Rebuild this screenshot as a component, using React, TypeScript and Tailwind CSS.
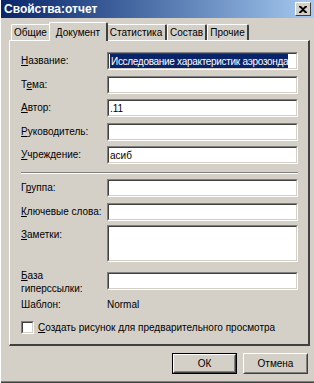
import React from "react";

const font = { fontFamily: '"Liberation Sans", Arial, sans-serif' };

function Field({ h = 18, children }: { h?: number; children?: React.ReactNode }) {
  return (
    <div
      className="w-[191px] border border-t-[#808080] border-l-[#808080] border-b-white border-r-white"
      style={{ height: h }}
    >
      <div className="h-full border border-t-[#404040] border-l-[#404040] border-b-[#d4d0c8] border-r-[#d4d0c8] bg-white overflow-hidden whitespace-nowrap flex items-center pl-[1px] text-[10px] text-black">
        {children}
      </div>
    </div>
  );
}

function Row({ label, mt, h, children, top }: { label: React.ReactNode; mt: number; h?: number; children?: React.ReactNode; top?: boolean }) {
  return (
    <div className={"flex " + (top ? "items-start" : "items-center")} style={{ marginTop: mt }}>
      <div className={"w-[86px] text-[10px] leading-[12px] text-black " + (top ? "pt-[4px]" : "")}>{label}</div>
      <Field h={h}>{children}</Field>
    </div>
  );
}

function Tab({ label, w, active }: { label: string; w: number; active?: boolean }) {
  if (active) {
    return (
      <div
        className="relative z-10 -mx-[2px] -mb-px h-[19px] bg-[#d4d0c8] border-t border-l border-t-white border-l-white border-r-2 border-r-[#404040] rounded-t-[2px] flex items-center justify-center text-[10px] text-black"
        style={{ width: w + 4 }}
      >
        {label}
      </div>
    );
  }
  return (
    <div
      className="h-[16px] bg-[#d4d0c8] border-t border-l border-t-white border-l-white border-r-2 border-r-[#404040] rounded-t-[2px] flex items-center justify-center text-[10px] text-black"
      style={{ width: w }}
    >
      {label}
    </div>
  );
}

function Button({ label, def }: { label: string; def?: boolean }) {
  return (
    <div className={"w-[65px] h-[21px] " + (def ? "border border-black" : "")}>
      <div className="h-full border border-t-white border-l-white border-b-[#404040] border-r-[#404040]">
        <div className="h-full border border-t-[#d4d0c8] border-l-[#d4d0c8] border-b-[#808080] border-r-[#808080] flex items-center justify-center text-[10px] text-black">
          {label}
        </div>
      </div>
    </div>
  );
}

export default function App() {
  return (
    <div className="w-[314px] h-[383px] bg-[#d4d0c8] flex flex-col overflow-hidden border-l border-l-white" style={font}>
      {/* заголовок */}
      <div className="h-[18px] shrink-0 flex items-center justify-between pl-[3px] pr-[3px] bg-gradient-to-r from-[#0a246a] to-[#a6caf0]">
        <span className="text-white font-bold text-[12px] leading-none">Свойства:отчет</span>
        <div className="w-[16px] h-[14px] bg-[#d4d0c8] border border-t-white border-l-white border-b-[#404040] border-r-[#404040] flex items-center justify-center">
          <svg width="8" height="7" viewBox="0 0 8 7">
            <path d="M0 0h2l2 2 2-2h2v1L5 3.5 8 6v1H6L4 5 2 7H0V6l3-2.5L0 1z" fill="black" />
          </svg>
        </div>
      </div>

      {/* вкладки */}
      <div className="flex items-end pl-[10px] pt-[3px] h-[22px] shrink-0">
        <Tab label="Общие" w={40} />
        <Tab label="Документ" w={55} active />
        <Tab label="Статистика" w={61} />
        <Tab label="Состав" w={40} />
        <Tab label="Прочие" w={42} />
      </div>

      {/* панель */}
      <div className="ml-[8px] w-[301px] h-[306px] shrink-0 border-t border-l border-t-white border-l-white border-r-2 border-b-2 border-r-[#404040] border-b-[#404040] pl-[11px] pt-[11px]">
        <Row label={<><u>Н</u>азвание:</>} mt={0}>
          <span className="bg-[#0a246a] text-white pl-[1px] tracking-[-0.3px]">Исследование характеристик аэрозонда</span>
        </Row>
        <Row label={<>Т<u>е</u>ма:</>} mt={6} />
        <Row label={<><u>А</u>втор:</>} mt={5}>.11</Row>
        <Row label={<><u>Р</u>уководитель:</>} mt={6} />
        <Row label={<><u>У</u>чреждение:</>} mt={5}>асиб</Row>

        <div className="mt-[8px] w-[277px] h-[2px] border-t border-t-[#808080] border-b border-b-white" />

        <Row label={<>Г<u>р</u>уппа:</>} mt={5} />
        <Row label={<><u>К</u>лючевые слова:</>} mt={6} />
        <Row label={<><u>З</u>аметки:</>} mt={4} h={37} top />
        <div className="flex items-start h-[18px] mt-[10px]">
          <div className="w-[86px] -mt-[3px] text-[10px] leading-[13px] text-black">
            <u>Б</u>аза
            <br />
            гиперссылки:
          </div>
          <Field />
        </div>
        <div className="flex items-center h-[12px] mt-[8px] text-[10px] text-black">
          <div className="w-[86px]">Шаблон:</div>
          <div>Normal</div>
        </div>
        <div className="flex items-center mt-[10px] text-[10px] text-black">
          <div className="w-[13px] h-[13px] border border-t-[#808080] border-l-[#808080] border-b-white border-r-white">
            <div className="h-full border border-t-[#404040] border-l-[#404040] border-b-[#d4d0c8] border-r-[#d4d0c8] bg-white" />
          </div>
          <span className="ml-[4px]"><u>С</u>оздать рисунок для предварительного просмотра</span>
        </div>
      </div>

      {/* кнопки */}
      <div className="flex justify-end gap-[6px] pr-[6px] mt-[7px]">
        <Button label="ОК" def />
        <Button label="Отмена" />
      </div>

      <div className="mt-auto h-[2px] border-t border-t-[#808080] border-b border-b-[#404040]" />
    </div>
  );
}
